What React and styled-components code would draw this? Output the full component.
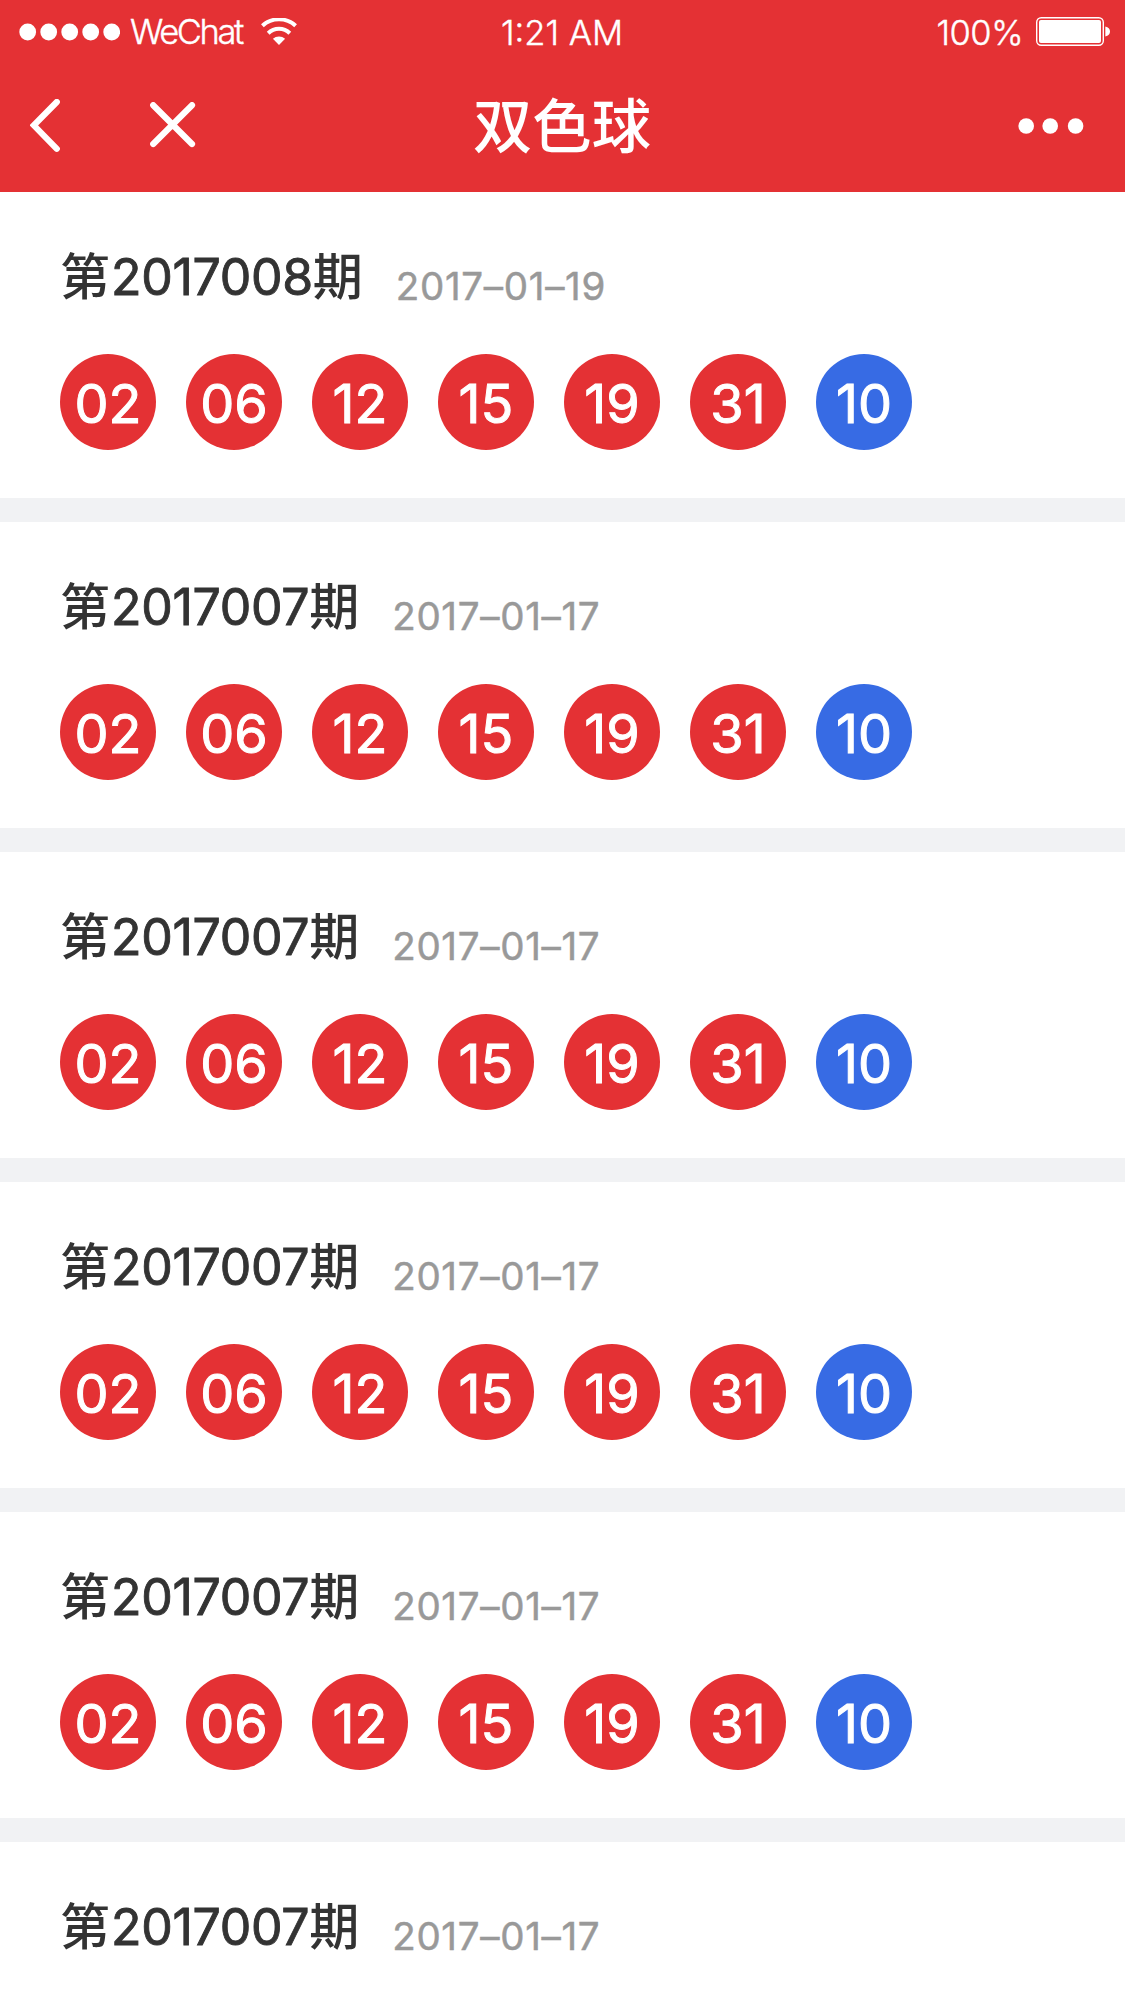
import styled, { createGlobalStyle } from "styled-components"

const numbers = { red: ['02', '06', '12', '15', '19', '31'], blue: '10' }

const draws = [
  { id: 1, issue: '2017008', date: '2017–01–19', numbers },
  { id: 2, issue: '2017007', date: '2017–01–17', numbers },
  { id: 3, issue: '2017007', date: '2017–01–17', numbers },
  { id: 4, issue: '2017007', date: '2017–01–17', numbers },
  { id: 5, issue: '2017007', date: '2017–01–17', numbers },
  { id: 6, issue: '2017007', date: '2017–01–17' },
]

const StatusBar = () => (
  <Status>
    <Carrier>
      <svg width="101" height="18" viewBox="0 0 101 18" fill="#fff">
        {[8.7, 29.7, 50.7, 71.7, 92.7].map((cx) => <circle key={cx} cx={cx} cy="9" r="8.4" />)}
      </svg>
      <CarrierName>WeChat</CarrierName>
      <svg width="36" height="27" viewBox="0 0 36 27" fill="none">
        <path d="M1.4 7.8a24.5 24.5 0 0 1 33.2 0" stroke="#fff" strokeWidth="4" />
        <path d="M7.2 15.2a15.5 15.5 0 0 1 21.6 0" stroke="#fff" strokeWidth="4" />
        <path d="M11.9 20.8a9 9 0 0 1 12.2 0L18 27z" fill="#fff" />
      </svg>
    </Carrier>
    <Time>1:21 AM</Time>
    <Power>
      <Percent>100%</Percent>
      <svg width="75" height="29" viewBox="0 0 75 29">
        <rect x="0.7" y="0.7" width="66.6" height="27.6" rx="4.5" fill="none" stroke="#fff" strokeWidth="1.4" />
        <rect x="3" y="3" width="62" height="23" rx="2" fill="#fff" />
        <path d="M69.3 9.5c3 .6 4.7 2.5 4.7 5s-1.7 4.4-4.7 5z" fill="#fff" />
      </svg>
    </Power>
  </Status>
)

const NavBar = () => (
  <Nav>
    <NavLeft>
      <NavButton aria-label="back">
        <svg width="31" height="54" viewBox="0 0 31 54" fill="none">
          <path d="M26.8 3L3.8 26.3l23 23.5" stroke="#fff" strokeWidth="6.2" strokeLinecap="round" />
        </svg>
      </NavButton>
      <NavButton $raised aria-label="close">
        <svg width="46" height="46" viewBox="0 0 46 46" fill="none">
          <path d="M3.2 3.2l38.8 38.8M42 3.2L3.2 42" stroke="#fff" strokeWidth="6.2" strokeLinecap="round" />
        </svg>
      </NavButton>
    </NavLeft>
    <Title>双色球</Title>
    <NavRight>
      <NavButton aria-label="more">
        <svg width="66" height="16" viewBox="0 0 66 16" fill="#fff">
          <circle cx="8.2" cy="8" r="7.8" />
          <circle cx="32.2" cy="8" r="7.8" />
          <circle cx="57.6" cy="8" r="7.8" />
        </svg>
      </NavButton>
    </NavRight>
  </Nav>
)

const App = () => {
  return (
    <>
      <GlobalStyle />
      <Header>
        <StatusBar />
        <NavBar />
      </Header>
      <List>
        {draws.map((draw) =>
          <Draw key={draw.id}>
            <DrawHead>
              <Issue>第<IssueNumber>{draw.issue}</IssueNumber>期</Issue>
              <DrawDate>{draw.date}</DrawDate>
            </DrawHead>
            {draw.numbers &&
              <Balls>
                {draw.numbers.red.map((num) => <Ball key={num}>{num}</Ball>)}
                <Ball $blue>{draw.numbers.blue}</Ball>
              </Balls>
            }
          </Draw>
        )}
      </List>
    </>
  )
}

export default App

const GlobalStyle = createGlobalStyle`
  * {
    box-sizing: border-box;
  }
  body {
    margin: 0;
    background: #fff;
    font-family: Inter, "Noto Sans CJK SC", sans-serif;
  }
  svg {
    display: block;
    flex: none;
  }
`

const Header = styled.header`
  height: 192px;
  background: #e43134;
  color: #fff;
`

const Status = styled.div`
  display: grid;
  grid-template-columns: 1fr auto 1fr;
  align-items: center;
  height: 61px;
  padding: 0 14px 0 19px;
  font-size: 34.5px;
  font-weight: 300;
  line-height: 61px;
  -webkit-text-stroke: 0.4px #fff;
`

const Carrier = styled.div`
  display: flex;
  align-items: center;
`

const CarrierName = styled.span`
  width: 113px;
  margin: 0 18px 0 10px;
  letter-spacing: -2.4px;
  white-space: nowrap;
`

const Time = styled.span`
  margin-right: 6px;
  padding-top: 2px;
`

const Power = styled.div`
  display: flex;
  align-items: center;
  justify-content: flex-end;
  gap: 13px;
`

const Percent = styled.span`
  padding-top: 2px;
  letter-spacing: -0.5px;
`

const Nav = styled.nav`
  display: grid;
  grid-template-columns: 1fr auto 1fr;
  align-items: center;
  height: 129px;
  padding: 0 41px 0 30px;
`

const NavLeft = styled.div`
  display: flex;
  align-items: center;
  gap: 89px;
`

const NavRight = styled.div`
  display: flex;
  justify-content: flex-end;
`

const NavButton = styled.button`
  padding: 0;
  margin-bottom: ${({ $raised }) => ($raised ? '2px' : '0')};
  border: none;
  background: none;
`

const Title = styled.h1`
  margin: 2px 0 0 10px;
  font-size: 59.3px;
  font-weight: 500;
  line-height: 127px;
`

const List = styled.main`
  display: flex;
  flex-direction: column;
  gap: 24px;
  height: 1809px;
  overflow: hidden;
  background: #f1f2f4;
`

const Draw = styled.section`
  flex: none;
  height: 306px;
  padding: 48px 60px 0;
  background: #fff;
`

const DrawHead = styled.div`
  display: flex;
  height: 72px;
  margin-bottom: 42px;
`

const Issue = styled.h2`
  margin: 0;
  color: #333;
  font-size: 50px;
  font-weight: 500;
  line-height: 74px;
`

const IssueNumber = styled.span`
  margin-left: 1px;
  font-weight: 400;
  letter-spacing: -0.3px;
  -webkit-text-stroke: 0.9px #333;
`

const DrawDate = styled.span`
  margin-left: 33px;
  padding-top: 10px;
  color: #999;
  font-size: 38.5px;
  letter-spacing: 0.7px;
  line-height: 72px;
  -webkit-text-stroke: 0.5px #999;
`

const Balls = styled.div`
  display: flex;
  gap: 30px;
`

const Ball = styled.span`
  width: 96px;
  height: 96px;
  border-radius: 50%;
  background: ${({ $blue }) => ($blue ? '#376be4' : '#e43134')};
  color: #fff;
  font-size: 54px;
  font-weight: 400;
  line-height: 100px;
  text-align: center;
  -webkit-text-stroke: 1px #fff;
`
